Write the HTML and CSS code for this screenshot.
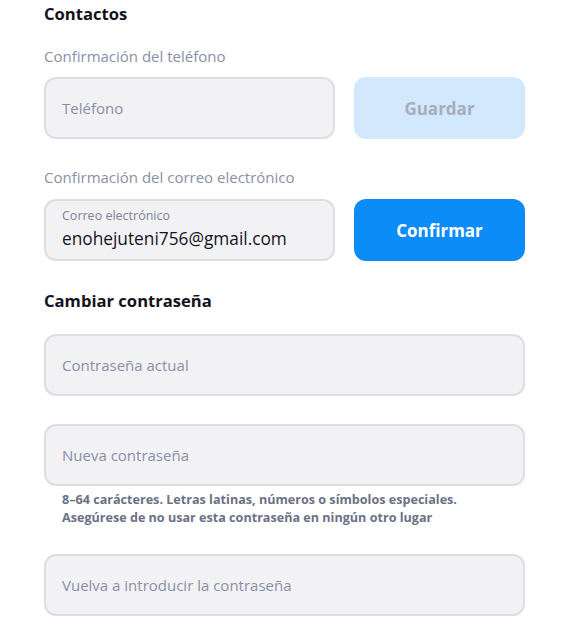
FILE: index.html
```html
<!DOCTYPE html>
<html lang="es">
<head>
<meta charset="utf-8">
<title>Contactos</title>
<link rel="stylesheet" href="styles.css">
</head>
<body>
<main class="page">
  <h2 class="title">Contactos</h2>
  <div class="label">Confirmación del teléfono</div>
  <div class="row">
    <div class="field"><span class="placeholder">Teléfono</span></div>
    <button class="btn btn-disabled">Guardar</button>
  </div>
  <div class="label label-next">Confirmación del correo electrónico</div>
  <div class="row">
    <div class="field field-filled">
      <span class="float-label">Correo electrónico</span>
      <span class="value">enohejuteni756@gmail.com</span>
    </div>
    <button class="btn btn-primary">Confirmar</button>
  </div>
  <h2 class="title title-next">Cambiar contraseña</h2>
  <div class="field field-wide"><span class="placeholder">Contraseña actual</span></div>
  <div class="field field-wide field-next"><span class="placeholder">Nueva contraseña</span></div>
  <p class="hint">8–64 carácteres. Letras latinas, números o símbolos especiales.<br>Asegúrese de no usar esta contraseña en ningún otro lugar</p>
  <div class="field field-wide"><span class="placeholder">Vuelva a introducir la contraseña</span></div>
</main>
</body>
</html>
```
FILE: styles.css
```css
html, body {
  margin: 0;
  padding: 0;
  background: #ffffff;
}
body {
  font-family: "Open Sans", "Noto Sans", sans-serif;
  color: #14141f;
}
.page {
  width: 481px;
  padding: 2px 0 0 44px;
  display: flex;
  flex-direction: column;
}
.title {
  margin: 0;
  font-size: 16.6px;
  line-height: 24px;
  font-weight: 700;
  color: #12121c;
}
.title-next {
  margin-top: 28px;
  margin-bottom: 21px;
}
.label {
  margin-top: 20px;
  margin-bottom: 11px;
  font-size: 15px;
  line-height: 20px;
  color: #8a8fa6;
}
.label-next {
  margin-top: 28px;
  margin-bottom: 12px;
}
.row {
  display: flex;
  gap: 19px;
}
.field {
  box-sizing: border-box;
  height: 62px;
  width: 291px;
  border: 2px solid #dddde3;
  border-radius: 12px;
  background: #f2f2f5;
  padding: 0 16px;
  display: flex;
  flex-direction: column;
  justify-content: center;
}
.field-wide {
  width: 481px;
}
.field-next {
  margin-top: 28px;
}
.placeholder {
  font-size: 15px;
  line-height: 20px;
  color: #8a8fa6;
}
.float-label {
  font-size: 12.5px;
  line-height: 16px;
  color: #7e8398;
}
.value {
  margin-top: 2px;
  font-size: 17.3px;
  line-height: 26px;
  color: #14141f;
}
.field-filled {
  justify-content: flex-start;
  padding-top: 7px;
}
.btn {
  box-sizing: border-box;
  width: 171px;
  height: 62px;
  border: none;
  border-radius: 12px;
  font-family: inherit;
  font-size: 17px;
  font-weight: 700;
  padding: 0;
}
.btn-disabled {
  background: #d1e8fd;
  color: #a8adbd;
}
.btn-primary {
  background: #0c8cf7;
  color: #ffffff;
}
.hint {
  margin: 5px 0 27px;
  padding-left: 18px;
  font-size: 12.6px;
  line-height: 18px;
  font-weight: 700;
  color: #6c7185;
}
```
